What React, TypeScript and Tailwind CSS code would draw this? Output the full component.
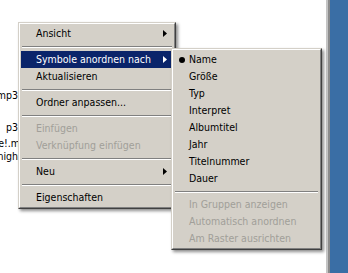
import React from "react";

type Entry =
  | { kind: "item"; label: string; arrow?: boolean; active?: boolean; disabled?: boolean; bullet?: boolean }
  | { kind: "sep" };

const mainMenu: Entry[] = [
  { kind: "item", label: "Ansicht", arrow: true },
  { kind: "sep" },
  { kind: "item", label: "Symbole anordnen nach", arrow: true, active: true },
  { kind: "item", label: "Aktualisieren" },
  { kind: "sep" },
  { kind: "item", label: "Ordner anpassen..." },
  { kind: "sep" },
  { kind: "item", label: "Einfügen", disabled: true },
  { kind: "item", label: "Verknüpfung einfügen", disabled: true },
  { kind: "sep" },
  { kind: "item", label: "Neu", arrow: true },
  { kind: "sep" },
  { kind: "item", label: "Eigenschaften" },
];

const subMenu: Entry[] = [
  { kind: "item", label: "Name", bullet: true },
  { kind: "item", label: "Größe" },
  { kind: "item", label: "Typ" },
  { kind: "item", label: "Interpret" },
  { kind: "item", label: "Albumtitel" },
  { kind: "item", label: "Jahr" },
  { kind: "item", label: "Titelnummer" },
  { kind: "item", label: "Dauer" },
  { kind: "sep" },
  { kind: "item", label: "In Gruppen anzeigen", disabled: true },
  { kind: "item", label: "Automatisch anordnen", disabled: true },
  { kind: "item", label: "Am Raster ausrichten", disabled: true },
];

const Arrow = ({ white }: { white?: boolean }) => (
  <svg width="4" height="7" viewBox="0 0 4 7" className="ml-auto mr-[6px] shrink-0">
    <polygon points="0,0 4,3.5 0,7" fill={white ? "#ffffff" : "#000000"} />
  </svg>
);

const MenuList = ({ entries }: { entries: Entry[] }) => (
  <div className="flex flex-col">
    {entries.map((e, i) =>
      e.kind === "sep" ? (
        <div key={i} className="h-[9px] flex items-center px-px">
          <div className="w-full h-[2px] border-t border-b border-t-[#808080] border-b-white" />
        </div>
      ) : (
        <div
          key={i}
          className={`h-[17px] flex items-center whitespace-nowrap ${
            e.active ? "bg-[#0a246a] text-white" : e.disabled ? "text-[#a19f99]" : "text-black"
          }`}
        >
          <div className="w-[15px] flex justify-center shrink-0">
            {e.bullet && <div className="w-[6px] h-[6px] rounded-full bg-black" />}
          </div>
          <span>{e.label}</span>
          {e.arrow && <Arrow white={e.active} />}
        </div>
      )
    )}
  </div>
);

const MenuFrame = ({ className, children }: { className: string; children: React.ReactNode }) => (
  <div
    className={`absolute bg-[#d4d0c8] border border-t-[#d4d0c8] border-l-[#d4d0c8] border-r-[#404040] border-b-[#404040] shadow-[2px_2px_3px_rgba(0,0,0,0.45)] ${className}`}
  >
    <div className="border border-t-white border-l-white border-r-[#808080] border-b-[#808080] p-px">
      {children}
    </div>
  </div>
);

export default function App() {
  return (
    <div className="relative w-[348px] h-[273px] overflow-hidden bg-white flex font-['DejaVu_Sans_Condensed','Liberation_Sans',Arial,sans-serif] text-[10.5px] leading-none">
      <div className="flex-1">
        <div className="w-[18px] overflow-hidden text-black pt-[90px]">
          <div className="flex justify-end whitespace-nowrap h-[13px]">
            <span>mp3</span>
          </div>
          <div className="flex justify-end whitespace-nowrap h-[13px] mt-[19px]">
            <span>p3</span>
          </div>
          <div className="flex justify-end whitespace-nowrap h-[13px] mt-[3px]">
            <span className="-mr-[14px]">e!.mp3</span>
          </div>
          <div className="flex justify-end whitespace-nowrap h-[13px]">
            <span className="-mr-[28px]">night.mp3</span>
          </div>
        </div>
      </div>
      <div className="w-[22px] flex shrink-0">
        <div className="w-[2px] bg-[#c4c4c4]" />
        <div className="w-[2px] bg-[#8c8c8c]" />
        <div className="flex-1 bg-[#3a6ea5]" />
      </div>

      <MenuFrame className="left-[18px] top-[22px] w-[158px]">
        <MenuList entries={mainMenu} />
      </MenuFrame>

      <MenuFrame className="left-[171px] top-[48px] w-[151px]">
        <MenuList entries={subMenu} />
      </MenuFrame>
    </div>
  );
}
